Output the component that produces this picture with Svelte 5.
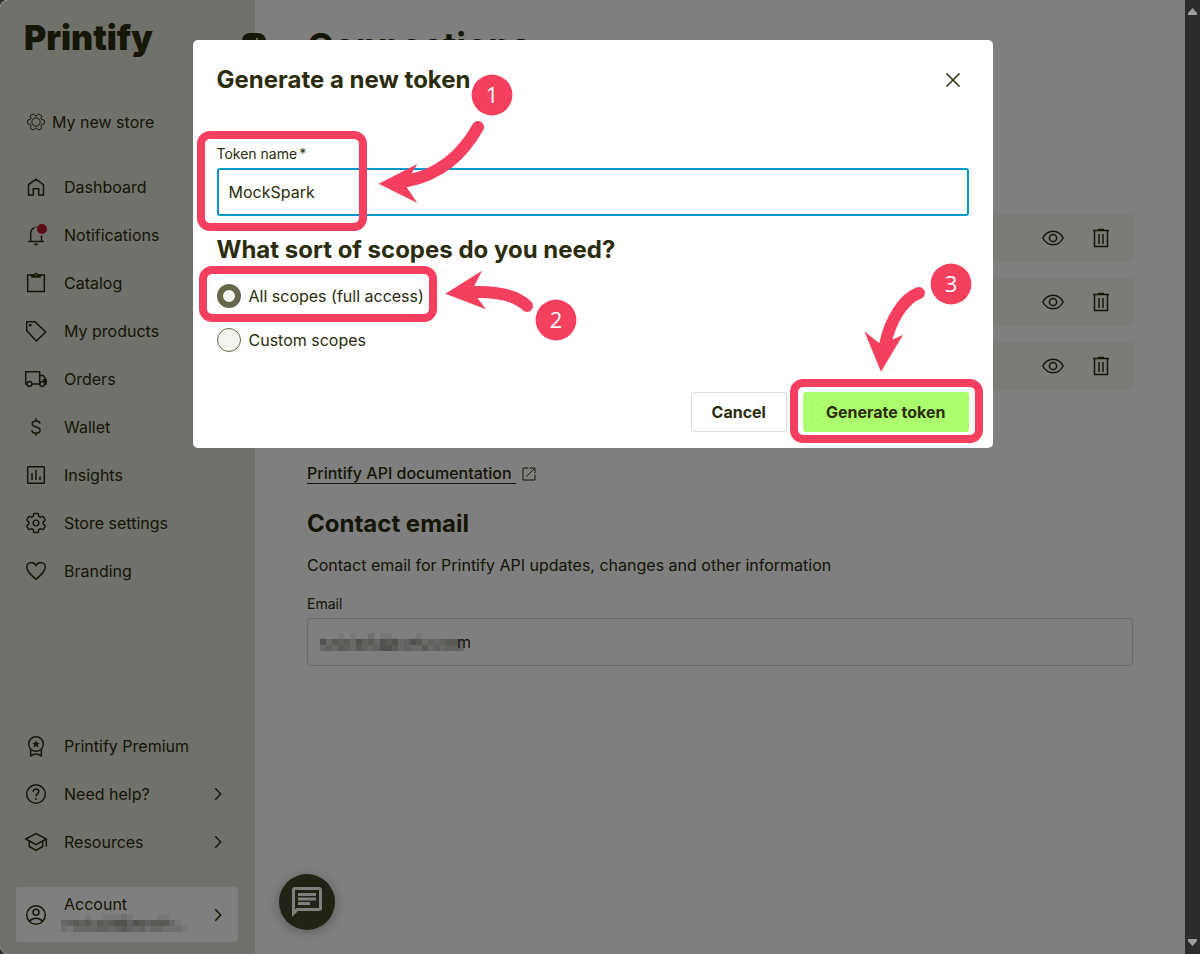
<script>
  const gear =
    'M19.43 12.98c.04-.32.07-.64.07-.98 0-.34-.03-.66-.07-.98l2.11-1.65c.19-.15.24-.42.12-.64l-2-3.46c-.09-.16-.26-.25-.44-.25-.06 0-.12.01-.17.03l-2.49 1c-.52-.4-1.08-.73-1.69-.98l-.38-2.65C14.46 2.18 14.25 2 14 2h-4c-.25 0-.46.18-.49.42l-.38 2.65c-.61.25-1.17.59-1.69.98l-2.49-1c-.06-.02-.12-.03-.18-.03-.17 0-.34.09-.43.25l-2 3.46c-.13.22-.07.49.12.64l2.11 1.65c-.04.32-.07.65-.07.98 0 .33.03.66.07.98l-2.11 1.65c-.19.15-.24.42-.12.64l2 3.46c.09.16.26.25.44.25.06 0 .12-.01.17-.03l2.49-1c.52.4 1.08.73 1.69.98l.38 2.65c.03.24.24.42.49.42h4c.25 0 .46-.18.49-.42l.38-2.65c.61-.25 1.17-.59 1.69-.98l2.49 1c.06.02.12.03.18.03.17 0 .34-.09.43-.25l2-3.46c.12-.22.07-.49-.12-.64l-2.11-1.65z';

  const mainNav = [
    { id: 'home', label: 'Dashboard' },
    { id: 'bell', label: 'Notifications' },
    { id: 'catalog', label: 'Catalog' },
    { id: 'tag', label: 'My products' },
    { id: 'truck', label: 'Orders' },
    { id: 'dollar', label: 'Wallet' },
    { id: 'chart', label: 'Insights' },
    { id: 'gear', label: 'Store settings' },
    { id: 'heart', label: 'Branding' }
  ];
  const footNav = [
    { id: 'badge', label: 'Printify Premium', more: false },
    { id: 'help', label: 'Need help?', more: true },
    { id: 'cap', label: 'Resources', more: true }
  ];
  const tokens = [1, 2, 3];

  // Opacity of each mosaic cell that masks a private address, row by row.
  const accountMask = [
    [0, 0, 0, 0, 1, 0, 0, 1, 1, 1, 2, 1, 0, 0, 0, 0, 1, 1, 0, 0, 0],
    [3, 4, 5, 4, 5, 3, 5, 4, 5, 6, 6, 4, 6, 5, 4, 5, 5, 5, 3, 1, 0],
    [2, 1, 3, 3, 3, 3, 4, 4, 3, 4, 5, 4, 3, 4, 2, 3, 3, 2, 2, 2, 1]
  ];
  const emailMask = [
    [0, 0, 0, 1, 0, 1, 0, 0, 2, 0, 1, 1, 0, 0, 0, 0, 1, 0, 0, 0, 0, 0, 0, 0],
    [6, 3, 5, 4, 5, 3, 6, 4, 5, 3, 6, 5, 6, 3, 4, 6, 5, 3, 4, 3, 4, 5, 5, 3],
    [3, 4, 3, 5, 4, 3, 5, 4, 3, 4, 6, 6, 5, 3, 4, 3, 3, 5, 3, 4, 3, 4, 4, 3]
  ];

  let tokenName = $state('MockSpark');
  let scope = $state('all');
</script>

{#snippet icon(id)}
  <svg class="icon" viewBox="0 0 24 24" aria-hidden="true">
    {#if id === 'home'}
      <path d="M4.5 9.7 12 4.2l7.500 5.500V20h-4.800v-6.200H9.300V20H4.500z" />
    {:else if id === 'bell'}
      <path d="M6.700 18v-7.500c0-3 1.500-5 4-5.700M12.300 3.600v1M17.500 12.500V18M4 18.500h16" />
      <path class="solid" d="M10 20.500h4a2 2 0 0 1-4 0z" />
      <circle class="dot" cx="18" cy="6" r="5" />
    {:else if id === 'catalog'}
      <path d="M3.700 4h16.600v16.600H3.700z" />
      <path class="solid" d="M6 3.500h3.800a2.300 2.300 0 0 1 4.400 0H18L16.500 6.800h-9z" />
      <circle class="hole" cx="12" cy="4" r=".8" />
    {:else if id === 'tag'}
      <path d="M2.700 2.800h8.200L21.700 13l-9.400 9L2.700 11.600z" />
      <circle class="solid" cx="6.200" cy="6.200" r="1.400" />
    {:else if id === 'truck'}
      <path d="M3 17H1.700V4.700h14V17H8M15.700 8.500h3.600l3 4.300V17h-1.500" />
      <path class="solid" d="M18.500 12h3.600v4.500h-1.600z" />
      <circle cx="5.400" cy="17" r="2.400" />
      <circle cx="18.200" cy="17" r="2.400" />
    {:else if id === 'dollar'}
      <path d="M12 3.300v2.500M12 18.200v2.500M16 8.600C15.700 6.900 14.200 5.900 12 5.900S8.200 7 8.200 8.700c0 1.900 1.500 2.600 3.800 3.200s4.100 1.300 4.100 3.300c0 1.700-1.600 2.900-4.100 2.900s-4-1.100-4.200-3" />
    {:else if id === 'chart'}
      <rect x="3.700" y="3.700" width="16.600" height="16.600" rx=".8" />
      <path d="M8 10v7M12 7v10M16 13.500V17" />
    {:else if id === 'gear'}
      <g transform="translate(.6 .6) scale(.95)">
        <path d={gear} />
        <circle cx="12" cy="12" r="3" />
      </g>
    {:else if id === 'heart'}
      <path d="M12 20.300C7 16 2.700 12.300 2.700 8.300c0-2.900 2.100-4.800 4.600-4.800 2 0 3.700 1.100 4.700 3 1-1.900 2.700-3 4.700-3 2.500 0 4.600 1.900 4.600 4.800 0 4-4.300 7.700-9.300 12z" />
    {:else if id === 'badge'}
      <circle cx="12" cy="10" r="7.300" />
      <path d="M6.700 15.500v6.300c2-1.200 3.500-1.700 5.300-1.700s3.300.5 5.300 1.700v-6.300" />
      <path class="solid" d="m12 6.200 1.100 2.600 2.700.2-2.100 1.800.7 2.700-2.400-1.500-2.400 1.500.7-2.700L8.200 9l2.700-.2z" />
    {:else if id === 'help'}
      <circle cx="12" cy="12" r="9.300" />
      <path d="M9.200 9.800c0-1.700 1.200-2.700 2.800-2.700s2.800 1 2.800 2.500c0 2-2.800 2.200-2.800 4.700" />
      <circle class="solid" cx="12" cy="17" r="1" />
    {:else if id === 'cap'}
      <path d="M1.800 9 12 3.700 22.300 9 12 14.600zM5.300 11.200v5.300L12 20.300l6.700-3.800v-5.300M22.300 9v7.800" />
    {:else if id === 'user'}
      <circle cx="12" cy="12" r="9.300" />
      <circle cx="12" cy="9.300" r="3" />
      <path d="M5.500 18.300c1.600-2 3.900-3 6.500-3s4.900 1 6.500 3" />
    {:else if id === 'next'}
      <path d="m9.300 6.300 5.400 5.700-5.400 5.700" />
    {:else if id === 'eye'}
      <path d="M1.800 12C4 8 7.600 5.200 12 5.200S20 8 22.200 12C20 16 16.400 18.800 12 18.800S4 16 1.800 12z" />
      <circle cx="12" cy="12" r="3.600" />
    {:else if id === 'trash'}
      <path d="M4 4.500h16M9 3.600h6M5.500 4.500v16h13v-16M10 8v10M14 8v10" />
    {:else if id === 'external'}
      <path d="M11 3H3v18h18v-8M13 3h8v8M20.500 3.500 8 16" />
    {:else if id === 'close'}
      <path d="m5.500 5.500 13 13M18.500 5.500l-13 13" />
    {/if}
  </svg>
{/snippet}

{#snippet mask(rows)}
  <svg class="mask" viewBox="0 0 {rows[0].length * 6} 18" width={rows[0].length * 6} height="18" aria-hidden="true">
    {#each rows as row, y}
      {#each row as v, x}
        <rect x={x * 6} y={y * 6} width="6" height="6" fill-opacity={v / 14} />
      {/each}
    {/each}
  </svg>
{/snippet}

<div class="window">
  <div class="viewport">
    <aside class="sidebar">
      <a class="logo" href="#home">Printify</a>
      <button class="collapse" aria-label="Collapse menu">
        <svg viewBox="0 0 24 24" aria-hidden="true"><path d="M15 5v14M12 8l-4 4 4 4" /></svg>
      </button>

      <a class="store" href="#store">
        <svg class="store-icon" viewBox="0 0 24 24" aria-hidden="true">
          <path d={gear} transform="rotate(90 12 12)" />
          <circle cx="12" cy="12" r="5" />
        </svg>
        My new store
      </a>

      <nav class="nav">
        {#each mainNav as item}
          <a href="#{item.id}">{@render icon(item.id)}<span>{item.label}</span></a>
        {/each}
      </nav>

      <nav class="nav foot">
        {#each footNav as item}
          <a href="#{item.id}">
            {@render icon(item.id)}<span>{item.label}</span>
            {#if item.more}{@render icon('next')}{/if}
          </a>
        {/each}
      </nav>

      <button class="account">
        {@render icon('user')}
        <span class="who">Account{@render mask(accountMask)}</span>
        {@render icon('next')}
      </button>
    </aside>

    <main>
      <h1>Connections</h1>
      <ul class="tokens">
        {#each tokens as token}
          <li>
            <button aria-label="View token {token}">{@render icon('eye')}</button>
            <button aria-label="Delete token {token}">{@render icon('trash')}</button>
          </li>
        {/each}
      </ul>
      <a class="docs" href="#docs"><span>Printify API documentation&nbsp;</span>{@render icon('external')}</a>
      <h2>Contact email</h2>
      <p>Contact email for Printify API updates, changes and other information</p>
      <label for="email">Email</label>
      <div class="email-box">
        <input id="email" type="email" />
        <span class="email-mask">{@render mask(emailMask)}<span>m</span></span>
      </div>
    </main>

    <button class="chat" aria-label="Open chat">
      <svg viewBox="0 0 30 30" aria-hidden="true">
        <path d="M0 30V3a3 3 0 0 1 3-3h24a3 3 0 0 1 3 3v18a3 3 0 0 1-3 3H6zM3 3v19.500L4.500 21H27V3z" fill-rule="evenodd" />
        <path d="M6 6h18v3H6zM6 10.500h18v3H6zM6 15h12v3H6z" />
      </svg>
    </button>

    <div class="overlay">
      <div class="modal" role="dialog" aria-modal="true" aria-labelledby="dialog-title">
        <header>
          <h2 id="dialog-title">Generate a new token</h2>
          <button class="close" aria-label="Close">{@render icon('close')}</button>
        </header>
        <label for="token">Token name<span class="required">*</span></label>
        <input id="token" type="text" bind:value={tokenName} />
        <h2 id="scope-title">What sort of scopes do you need?</h2>
        <div class="radios" role="radiogroup" aria-labelledby="scope-title">
          <label><input type="radio" name="scope" value="all" bind:group={scope} />All scopes (full access)</label>
          <label><input type="radio" name="scope" value="custom" bind:group={scope} />Custom scopes</label>
        </div>
        <footer>
          <button class="btn">Cancel</button>
          <button class="btn primary">Generate token</button>
        </footer>

        <svg class="guide" viewBox="193 40 800 408" aria-hidden="true">
          <g class="frame">
            <rect x="201" y="135" width="162" height="92" rx="9" />
            <rect x="203" y="270" width="230" height="48" rx="9" />
            <rect x="794" y="383" width="185" height="56" rx="9" />
          </g>
          <g class="shaft">
            <path d="M478 127Q453 172 407 181" />
            <path d="M474 292Q512 291 527 306" />
            <path d="M919 293C904 298 890 320 885 345" />
          </g>
          <g class="fill">
            <path d="M378.700 183.700 417.300 164 411.700 173.300 406.700 187.300 417.300 203z" />
            <path d="M445.300 293.700 482 270.700 474.300 286 478 298.700 486 309.300z" />
            <path d="M881 371.700 864.300 331.300 879.300 343.300 893.300 339.300 903 334.700z" />
            <circle cx="492" cy="95" r="20.400" />
            <circle cx="556" cy="320" r="20.400" />
            <circle cx="951" cy="284" r="20.400" />
          </g>
          <text x="492" y="103">1</text>
          <text x="556" y="328">2</text>
          <text x="951" y="292">3</text>
        </svg>
      </div>
    </div>
  </div>

  <div class="scrollbar" aria-hidden="true">
    <svg viewBox="0 0 9 7"><path d="M4.500 0 9 5v2H0V5z" /></svg>
    <svg viewBox="0 0 9 7"><path d="M4.500 7 9 2V0H0v2z" /></svg>
  </div>
</div>

<style>
  :global(body) {
    margin: 0;
    background: #2c2c2c;
  }
  * {
    box-sizing: border-box;
  }
  .window {
    display: flex;
    min-height: 100vh;
    background: #2c2c2c;
    color: #2c2c0c;
    font: 16px/24px Inter, sans-serif;
  }
  .viewport {
    position: relative;
    display: flex;
    flex: 1;
    min-width: 0;
    overflow: hidden;
    border-radius: 8px 0 0 8px;
    background: #fff;
  }
  button,
  input {
    font: inherit;
    color: inherit;
  }
  button {
    padding: 0;
    border: 0;
    background: none;
    cursor: pointer;
  }
  a {
    color: inherit;
    text-decoration: none;
  }
  h1,
  h2,
  p {
    margin: 0;
  }
  h2 {
    font-size: 24px;
    line-height: 32px;
    font-weight: 700;
  }
  .icon {
    display: block;
    flex: none;
    width: 24px;
    height: 24px;
    fill: none;
    stroke: currentColor;
    stroke-width: 1.500;
  }
  .icon .solid {
    fill: currentColor;
    stroke: none;
  }
  .icon .dot {
    fill: #b8182c;
    stroke: none;
  }
  .icon .hole {
    fill: #e0e2d4;
    stroke: none;
  }

  .sidebar {
    position: relative;
    display: flex;
    flex-direction: column;
    flex: none;
    width: 255px;
    padding: 20px 17px 12px 16px;
    background: #e0e2d5;
  }
  .logo {
    padding-left: 8px;
    font-size: 34px;
    line-height: 36px;
    font-weight: 900;
  }
  .collapse {
    position: absolute;
    top: 33px;
    right: -11px;
    z-index: 1;
    width: 24px;
    height: 24px;
    border-radius: 8px;
    background: #2c2c0c;
  }
  .collapse svg {
    display: block;
    fill: none;
    stroke: #fff;
    stroke-width: 1.500;
  }
  .store {
    display: flex;
    align-items: center;
    gap: 6px;
    margin: 42px 0 29px;
    padding: 12px 10px;
    height: 48px;
  }
  .store-icon {
    width: 20px;
    height: 20px;
    fill: none;
    stroke: currentColor;
    stroke-width: 1.200;
  }
  .nav {
    display: flex;
    flex-direction: column;
    margin-top: -12px;
  }
  .nav a {
    display: flex;
    align-items: center;
    gap: 16px;
    height: 48px;
    padding: 0 8px;
  }
  .nav span {
    flex: 1;
  }
  .foot {
    margin-top: auto;
    margin-bottom: 21px;
  }
  .account {
    display: flex;
    align-items: center;
    gap: 16px;
    height: 55px;
    padding: 0 8px;
    border-radius: 3px;
    background: #fff;
    text-align: left;
  }
  .who {
    display: flex;
    flex-direction: column;
    flex: 1;
    padding-bottom: 4px;
    line-height: 20px;
  }
  .mask {
    display: block;
    fill: #2c2c20;
  }
  .who .mask {
    margin-left: -3px;
  }

  main {
    flex: 1;
    min-width: 0;
    padding: 22px 52px 40px;
  }
  h1 {
    font-size: 36px;
    line-height: 48px;
    font-weight: 700;
  }
  .tokens {
    display: grid;
    gap: 16px;
    margin: 144px 0 71px;
    padding: 0;
    list-style: none;
  }
  .tokens li {
    display: flex;
    align-items: center;
    justify-content: flex-end;
    gap: 24px;
    height: 48px;
    padding: 0 20px;
    background: #f6f6f1;
  }
  .docs {
    display: inline-flex;
    align-items: center;
    gap: 5px;
    font-weight: 500;
  }
  .docs span {
    line-height: 20px;
    border-bottom: 1px solid;
  }
  .docs .icon {
    width: 16px;
    height: 16px;
  }
  .docs + h2 {
    margin: 23px 0 13px;
  }
  main label,
  .modal > label {
    display: block;
    font-size: 14px;
    line-height: 20px;
  }
  main label {
    margin: 17px 0 4px;
  }
  .email-box {
    position: relative;
  }
  .email-box input {
    display: block;
    width: 100%;
    height: 48px;
    padding: 0 12px;
    border: 1px solid #d7d9cc;
    border-radius: 3px;
    background: #fff;
  }
  .email-mask {
    position: absolute;
    top: 12px;
    left: 13px;
    display: flex;
    align-items: center;
  }
  .email-mask span {
    margin-left: -7px;
  }
  .chat {
    position: absolute;
    bottom: 24px;
    left: 279px;
    display: grid;
    place-items: center;
    width: 56px;
    height: 56px;
    border-radius: 50%;
    background: #44442a;
    box-shadow: 0 2px 12px rgba(0, 0, 0, 0.300);
  }
  .chat svg {
    width: 30px;
    height: 30px;
    fill: #fff;
  }

  .overlay {
    position: absolute;
    inset: 0;
    z-index: 2;
    padding: 40px 16px;
    background: rgba(0, 0, 0, 0.500);
  }
  .modal {
    position: relative;
    max-width: 800px;
    margin: 0 auto;
    padding: 24px 24px 16px;
    border-radius: 5px;
    background: #fff;
  }
  header {
    display: flex;
    align-items: center;
    justify-content: space-between;
    margin-bottom: 48px;
  }
  .close {
    display: grid;
    place-items: center;
    width: 32px;
    height: 32px;
  }
  .modal > label {
    margin-bottom: 4px;
  }
  .required {
    margin-left: 2px;
  }
  .modal > input {
    display: block;
    width: 100%;
    height: 48px;
    margin-bottom: 18px;
    padding: 0 10px;
    border: 2px solid #0598cf;
    border-radius: 3px;
    outline: none;
  }
  .radios {
    display: grid;
    gap: 20px;
    margin: 18px 0 40px;
  }
  .radios label {
    display: flex;
    align-items: center;
    gap: 8px;
  }
  .radios input {
    appearance: none;
    width: 24px;
    height: 24px;
    margin: 0;
    border: 1px solid #65664a;
    border-radius: 50%;
    background: #f3f4ee;
  }
  .radios input:checked {
    border-width: 6px;
  }
  footer {
    display: flex;
    justify-content: flex-end;
    gap: 16px;
  }
  .btn {
    height: 40px;
    padding: 0 20px;
    border: 1px solid #dcded2;
    border-radius: 3px;
    background: #fff;
    font-weight: 700;
  }
  .primary {
    padding: 0 22px;
    border-color: #acff6c;
    background: #acff6c;
  }
  .guide {
    position: absolute;
    inset: 0;
    width: 100%;
    height: 100%;
    overflow: visible;
    pointer-events: none;
  }
  .frame,
  .shaft {
    fill: none;
    stroke: #f53f5e;
    stroke-width: 8;
  }
  .shaft {
    stroke-width: 12;
    stroke-linecap: round;
  }
  .fill {
    fill: #f53f5e;
  }
  .guide text {
    fill: #fff;
    font: 22px "Open Sans", sans-serif;
    text-anchor: middle;
  }

  .scrollbar {
    display: flex;
    flex-direction: column;
    align-items: center;
    justify-content: space-between;
    flex: none;
    width: 15px;
    padding: 8px 0;
  }
  .scrollbar svg {
    width: 9px;
    height: 7px;
    fill: #9f9f9f;
  }
</style>
